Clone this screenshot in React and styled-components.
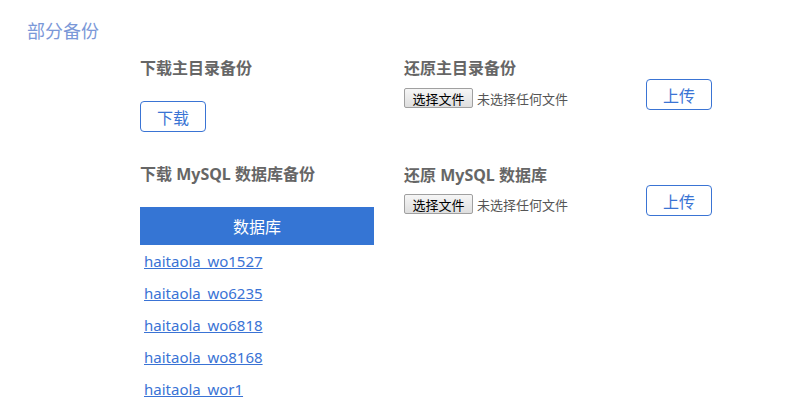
import React from 'react'
import styled, {createGlobalStyle} from 'styled-components'

const Global = createGlobalStyle`
    body {
        margin: 0;
        background: #fff;
        font-family: "Noto Sans", "Noto Sans CJK SC", sans-serif;
    }
`

const Page = styled.div`
    padding: 17px 0 0 27px;
`

const Title = styled.h2`
    margin: 0;
    font-size: 18px;
    line-height: 26px;
    font-weight: 400;
    color: #7b98d8;
    font-family: "Noto Sans CJK SC", sans-serif;
`

const Grid = styled.div`
    display: grid;
    grid-template-columns: 234px 308px;
    column-gap: 30px;
    row-gap: 32px;
    margin: 15px 0 0 113px;
`

const Cell = styled.div`
    display: flex;
    flex-direction: column;
    align-items: flex-start;
`

const Heading = styled.h3`
    margin: ${p => p.$top || 0}px 0 0;
    font-size: 16px;
    line-height: 20px;
    font-weight: 700;
    color: #666;
    font-family: "Noto Sans", "Noto Sans CJK SC", sans-serif;
`

const OutlineButton = styled.button`
    box-sizing: border-box;
    width: 66px;
    height: 31px;
    margin-top: ${p => p.$top || 0}px;
    border: 1px solid #3a74d4;
    border-radius: 4px;
    background: #fff;
    color: #3a74d4;
    font-size: 16px;
    font-family: "Noto Sans CJK SC", sans-serif;
    padding: 0;
    cursor: pointer;
`

const UploadRow = styled.div`
    display: flex;
    justify-content: space-between;
    align-items: flex-start;
    width: 100%;
    margin-top: ${p => p.$top || 0}px;
`

const FilePick = styled.label`
    display: flex;
    align-items: center;
    gap: 4px;
    margin-top: 9px;
`

const PickButton = styled.span`
    box-sizing: border-box;
    display: inline-flex;
    align-items: center;
    justify-content: center;
    width: 69px;
    height: 20px;
    border: 1px solid #a0a0a0;
    border-radius: 2px;
    background: linear-gradient(#f6f6f6, #dedede);
    color: #000;
    font-size: 13px;
    font-family: "Noto Sans CJK SC", sans-serif;
`

const NoFile = styled.span`
    font-size: 13px;
    color: #555;
    font-family: "Noto Sans CJK SC", sans-serif;
`

const Table = styled.div`
    width: 234px;
    margin-top: 23px;
`

const TableHead = styled.div`
    height: 38px;
    display: flex;
    align-items: center;
    justify-content: center;
    background: #3575d4;
    color: #fff;
    font-size: 16px;
    font-family: "Noto Sans CJK SC", sans-serif;
`

const DbLink = styled.a`
    display: block;
    padding-left: 4px;
    line-height: 32px;
    font-size: 15px;
    color: #3a73d5;
    text-decoration: underline;
    font-family: "Noto Sans", sans-serif;
`

const databases = ['haitaola_wo1527', 'haitaola_wo6235', 'haitaola_wo6818', 'haitaola_wo8168', 'haitaola_wor1']

const FileUpload = ({top}) => (
    <UploadRow $top={top}>
        <FilePick>
            <input type="file" hidden />
            <PickButton>选择文件</PickButton>
            <NoFile>未选择任何文件</NoFile>
        </FilePick>
        <OutlineButton>上传</OutlineButton>
    </UploadRow>
)

const App = () => (
    <Page>
        <Global />
        <Title>部分备份</Title>
        <Grid>
            <Cell>
                <Heading>下载主目录备份</Heading>
                <OutlineButton $top={23}>下载</OutlineButton>
            </Cell>
            <Cell>
                <Heading>还原主目录备份</Heading>
                <FileUpload top={1} />
            </Cell>
            <Cell>
                <Heading>下载 MySQL 数据库备份</Heading>
                <Table>
                    <TableHead>数据库</TableHead>
                    {databases.map(db => (
                        <DbLink key={db} href="#">{db}</DbLink>
                    ))}
                </Table>
            </Cell>
            <Cell>
                <Heading $top={1}>还原 MySQL 数据库</Heading>
                <FileUpload top={0} />
            </Cell>
        </Grid>
    </Page>
)

export default App
